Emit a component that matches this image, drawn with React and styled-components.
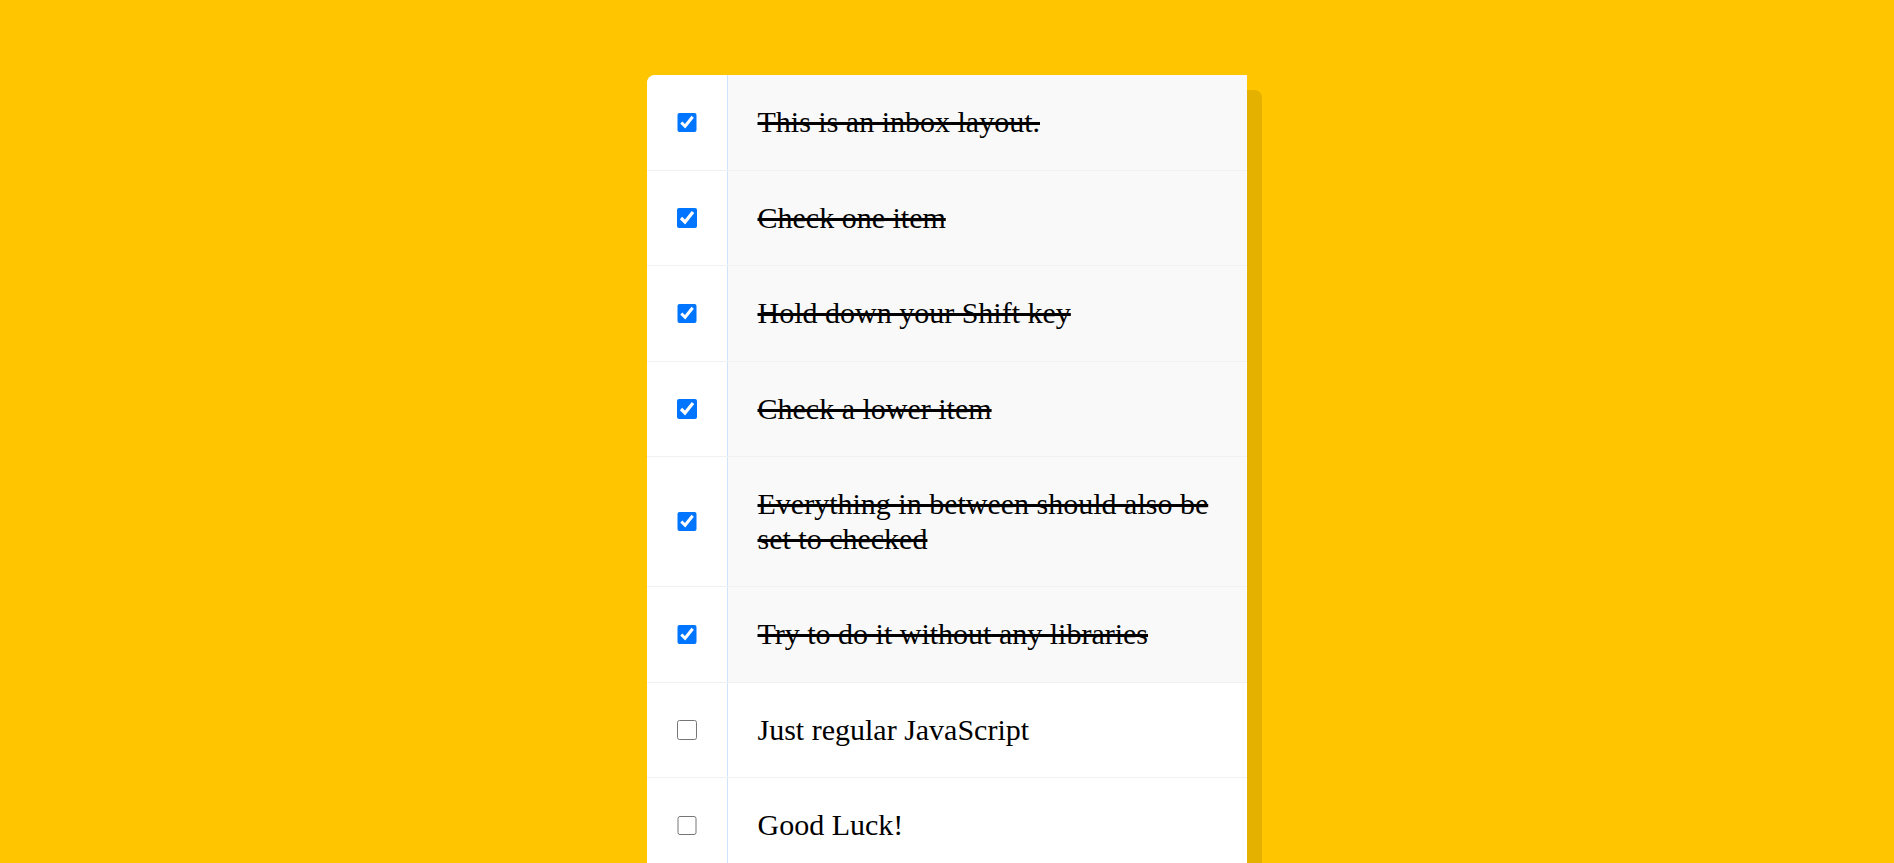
import React, { useState, useRef } from "react";
import styled, { createGlobalStyle } from "styled-components";

const items = [
  { text: "This is an inbox layout.", checked: true },
  { text: "Check one item", checked: true },
  { text: "Hold down your Shift key", checked: true },
  { text: "Check a lower item", checked: true },
  { text: "Everything in between should also be set to checked", checked: true },
  { text: "Try to do it without any libraries", checked: true },
  { text: "Just regular JavaScript", checked: false },
  { text: "Good Luck!", checked: false },
];

export default () => {
  const [checked, setChecked] = useState(items.map((i) => i.checked));
  const lastChecked = useRef(null);

  const handleClick = (index, e) => {
    const next = [...checked];
    const value = e.target.checked;
    next[index] = value;
    if (e.shiftKey && value && lastChecked.current !== null) {
      const from = Math.min(index, lastChecked.current);
      const to = Math.max(index, lastChecked.current);
      for (let i = from; i <= to; i++) next[i] = true;
    }
    lastChecked.current = index;
    setChecked(next);
  };

  return (
    <>
      <GlobalStyle />
      <Inbox>
        {items.map((item, i) => (
          <Item key={i}>
            <Check
              type="checkbox"
              checked={checked[i]}
              onChange={() => {}}
              onClick={(e) => handleClick(i, e)}
            />
            <Label $done={checked[i]}>{item.text}</Label>
          </Item>
        ))}
      </Inbox>
    </>
  );
};

const GlobalStyle = createGlobalStyle`
  html {
    background: #ffc600;
    font-family: "Liberation Serif", "Times New Roman", serif;
  }
  body {
    margin: 0;
  }
`;

const Inbox = styled.div`
  max-width: 600px;
  margin: 75px auto;
  background: white;
  border-radius: 7.5px;
  box-shadow: 15px 15px 0 rgba(0, 0, 0, 0.1);
`;

const Item = styled.div`
  display: flex;
  align-items: center;
  border-bottom: 1px solid #f1f1f1;

  &:last-child {
    border-bottom: 0;
  }
`;

const Check = styled.input`
  width: 19.5px;
  height: 19.5px;
  margin: 30px;
  flex-shrink: 0;
`;

const Label = styled.p`
  margin: 0;
  padding: 30px;
  flex: 1;
  font-size: 30px;
  line-height: 34.5px;
  font-weight: 200;
  color: #000;
  border-left: 1px solid #d1e2ff;
  background: ${(p) => (p.$done ? "#f9f9f9" : "transparent")};
  text-decoration: ${(p) => (p.$done ? "line-through" : "none")};
  transition: background 0.2s;
`;
